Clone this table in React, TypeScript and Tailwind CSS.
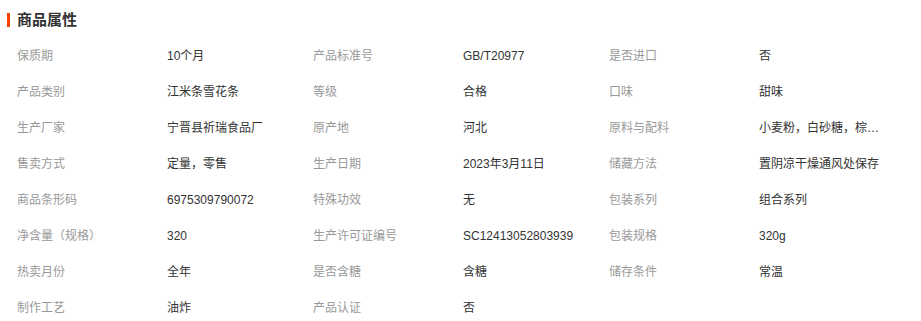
const attrs: [string, string][] = [
  ["保质期", "10个月"],
  ["产品标准号", "GB/T20977"],
  ["是否进口", "否"],
  ["产品类别", "江米条雪花条"],
  ["等级", "合格"],
  ["口味", "甜味"],
  ["生产厂家", "宁晋县祈瑞食品厂"],
  ["原产地", "河北"],
  ["原料与配料", "小麦粉，白砂糖，棕榈油，鸡蛋"],
  ["售卖方式", "定量，零售"],
  ["生产日期", "2023年3月11日"],
  ["储藏方法", "置阴凉干燥通风处保存"],
  ["商品条形码", "6975309790072"],
  ["特殊功效", "无"],
  ["包装系列", "组合系列"],
  ["净含量（规格）", "320"],
  ["生产许可证编号", "SC12413052803939"],
  ["包装规格", "320g"],
  ["热卖月份", "全年"],
  ["是否含糖", "含糖"],
  ["储存条件", "常温"],
  ["制作工艺", "油炸"],
  ["产品认证", "否"],
];

export default function App() {
  return (
    <div
      className="w-[921px] h-[321px] bg-white overflow-hidden"
      style={{ fontFamily: '"Liberation Sans", "Noto Sans CJK SC", sans-serif' }}
    >
      {/* Section title */}
      <div className="flex items-center h-[14px] mt-[13px] ml-[7px]">
        <span className="w-[3px] h-[14px] bg-[#ff4400]" />
        <h2 className="ml-[7px] text-[15px] leading-[14px] font-bold text-[#333]">商品属性</h2>
      </div>

      {/* Attribute grid */}
      <div className="mt-[11px] ml-[17px] grid grid-cols-[150px_146px_150px_146px_150px_146px]">
        {attrs.map(([label, value]) => (
          <div key={label} className="contents">
            <div className="h-[36px] flex items-center text-[12px] text-[#999] whitespace-nowrap">{label}</div>
            <div className="h-[36px] flex items-center text-[12px] text-[#333] min-w-0">
              <span className="block max-w-[128px] truncate">{value}</span>
            </div>
          </div>
        ))}
      </div>
    </div>
  );
}
